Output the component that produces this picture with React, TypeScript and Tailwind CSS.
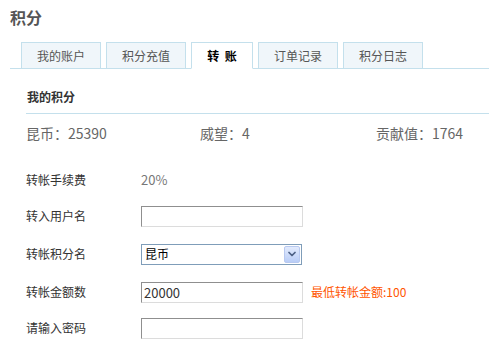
import { ChevronDown } from "lucide-react";

const tabs = [
  { label: "我的账户", w: "w-[80px]" },
  { label: "积分充值", w: "w-[80px]" },
  { label: "转\u00a0\u00a0账", w: "w-[62px]", active: true },
  { label: "订单记录", w: "w-[80px]" },
  { label: "积分日志", w: "w-[80px]" },
];

const inputCls =
  "w-[162px] h-[21px] border border-t-[#8f8f8f] border-l-[#8f8f8f] border-r-[#dcdcdc] border-b-[#dcdcdc] bg-white px-[2px] text-[13px] outline-none";

function Row({ label, children, h }: { label: string; children?: React.ReactNode; h: string }) {
  return (
    <div className={`flex items-center ${h}`}>
      <div className="w-[115px] text-[12px] text-[#333]">{label}</div>
      <div className="flex items-center">{children}</div>
    </div>
  );
}

export default function App() {
  return (
    <div
      className="min-h-screen w-full bg-white pl-[10px] text-[#333]"
      style={{ fontFamily: '"Noto Sans CJK SC", "Liberation Sans", sans-serif' }}
    >
      {/* titre */}
      <div className="h-[42px] pt-[6px] text-[16px] leading-[22px] font-bold text-[#555]">积分</div>

      {/* onglets */}
      <div className="flex items-end gap-[5px] border-b border-[#c4e0ec] pl-[11px]">
        {tabs.map((t) => (
          <div
            key={t.label}
            className={`${t.w} -mb-px flex h-[27px] items-center justify-center border border-[#c4e0ec] text-[12px] ${
              t.active ? "border-b-white bg-white font-bold text-black" : "bg-[#f0f6fa] text-[#555]"
            }`}
          >
            {t.label}
          </div>
        ))}
      </div>

      <div className="pl-[16px]">
        <div className="flex h-[45px] items-center border-b border-[#c4e0ec] pt-[12px] pl-px text-[12px] font-bold text-[#333]">
          我的积分
        </div>

        <div className="flex h-[38px] items-center pt-[1px] text-[14px] text-[#666]">
          <div className="w-[174px]">昆币：25390</div>
          <div className="w-[176px]">威望：4</div>
          <div>贡献值：1764</div>
        </div>

        <div className="pt-[10px]">
          <Row label="转帐手续费" h="h-[36px]">
            <span className="text-[13px] text-[#777]">20%</span>
          </Row>
          <Row label="转入用户名" h="h-[36px]">
            <input className={inputCls} />
          </Row>
          <Row label="转帐积分名" h="h-[40px]">
            <div className="flex h-[21px] w-[161px] items-center justify-between border border-[#7f9db9] bg-white pr-px pl-[3px] text-[12px] text-black">
              <span>昆币</span>
              <span className="flex h-[17px] w-[16px] items-center justify-center rounded-[2px] border border-[#b8c9f0] bg-gradient-to-b from-[#e3ebfd] to-[#b9cdf7]">
                <ChevronDown className="h-[12px] w-[12px] text-[#4d6185]" strokeWidth={3.5} />
              </span>
            </div>
          </Row>
          <Row label="转帐金额数" h="h-[36px]">
            <input className={inputCls} defaultValue="20000" />
            <span className="ml-[8px] text-[12px] text-[#ff5500]">最低转帐金额:100</span>
          </Row>
          <Row label="请输入密码" h="h-[36px]">
            <input className={inputCls} type="password" />
          </Row>
        </div>
      </div>
    </div>
  );
}
